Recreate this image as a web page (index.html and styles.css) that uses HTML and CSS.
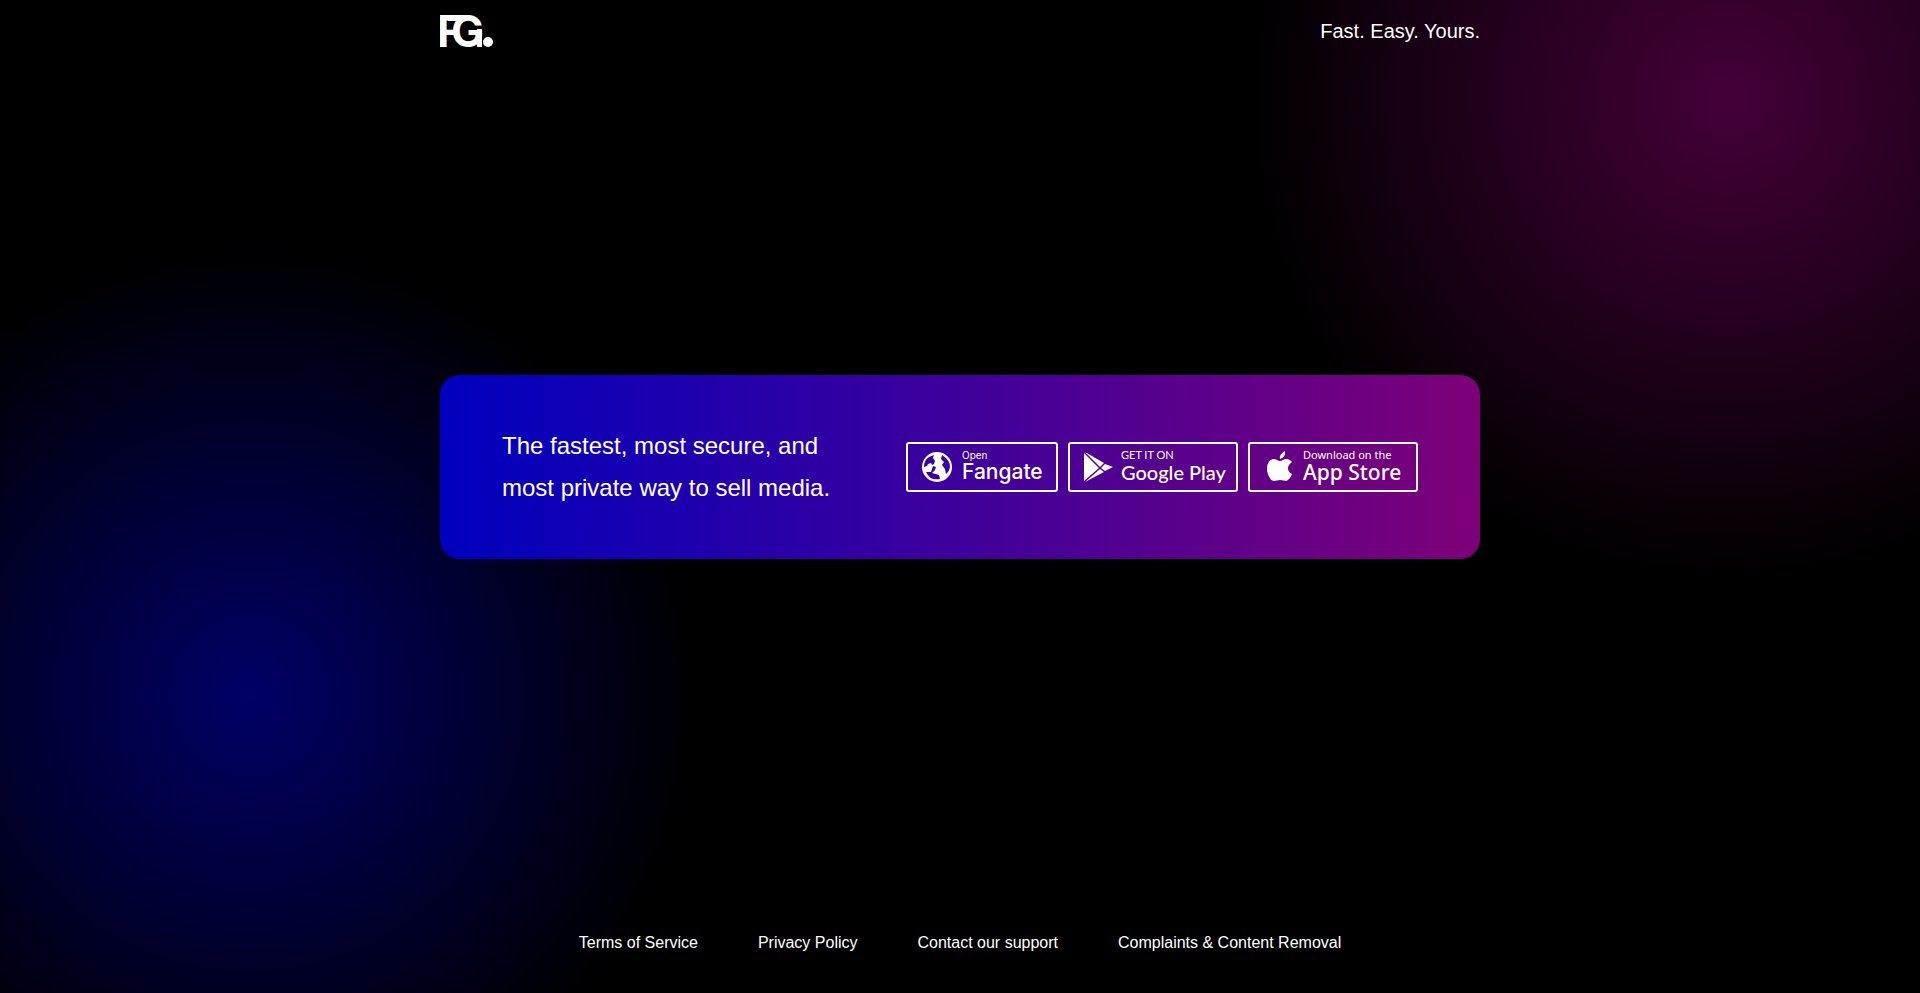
FILE: index.html
```html
<!DOCTYPE html>
<html lang="en">
<head>
    <meta charset="UTF-8">
    <meta name="viewport" content="width=device-width, initial-scale=1">
    <title>Fangate</title>
    <link rel="stylesheet" href="styles.css">
</head>
<body>
    <!-- Header -->
    <header class="container header">
        <a class="logo" href="/" aria-label="Fangate home">
            <svg width="54" height="34" viewBox="0 0 54 34">
                <defs>
                    <clipPath id="stem"><rect width="18" height="34"/></clipPath>
                </defs>
                <text class="logo-letter" x="-3" y="33" clip-path="url(#stem)">F</text>
                <rect x="8" y="1" width="20" height="6"/>
                <text class="logo-letter" x="11" y="33">G</text>
                <rect x="37" y="15" width="5" height="18"/>
                <circle cx="48" cy="28" r="5"/>
            </svg>
        </a>
        <p class="tagline">Fast. Easy. Yours.</p>
    </header>

    <!-- Banner -->
    <main class="container main">
        <section class="banner">
            <p class="banner-text">The fastest, most secure, and<br>most private way to sell media.</p>
            <div class="badges">
                <a class="badge fangate" href="#">
                    <svg width="30" height="30" viewBox="0 0 30 30">
                        <defs>
                            <mask id="land">
                                <rect width="30" height="30" fill="#fff"/>
                                <path fill="#000" d="M7 5L12 3L11 6L13 9L12 12L10 13L9 11L6 12L5 14L2 15Q2 8 7 5Z"/>
                                <path fill="#000" d="M4 20L9 20L11 14L14 15L13 18L10 21L17 23L18 27Q8 29 4 20Z"/>
                                <path fill="#000" d="M20 3Q28 8 28 15Q27 20 24 22L23 17L20 13L22 10L19 7Z"/>
                            </mask>
                        </defs>
                        <circle cx="15" cy="15" r="15" mask="url(#land)"/>
                    </svg>
                    <span class="badge-text">
                        <small>Open</small>
                        <strong>Fangate</strong>
                    </span>
                </a>
                <a class="badge google" href="#">
                    <svg width="29" height="32" viewBox="0 0 29 32">
                        <path d="M0 2V30L15 17ZM1 1L16 16L20 12ZM1 31L16 18L20 21ZM21 13L17 17L21 20L29 16Z"/>
                    </svg>
                    <span class="badge-text">
                        <small>GET IT ON</small>
                        <strong>Google Play</strong>
                    </span>
                </a>
                <a class="badge apple" href="#">
                    <svg width="26" height="32" viewBox="0 0 26 32">
                        <path d="M18 0Q19 6 13 8Q12 3 18 0Z"/>
                        <path d="M13 10C15 10 17 8 19 8Q23 8 25 11Q21 14 21 17Q21 21 25 23C24 26 21 30 19 30C17 30 16 29 13 29C11 29 9 30 7 30C3 30 0 22 0 18C0 12 3 8 7 8C9 8 11 10 13 10Z"/>
                    </svg>
                    <span class="badge-text">
                        <small>Download on the</small>
                        <strong>App Store</strong>
                    </span>
                </a>
            </div>
        </section>
    </main>

    <!-- Footer -->
    <footer class="footer">
        <a href="#">Terms of Service</a>
        <a href="#">Privacy Policy</a>
        <a href="#">Contact our support</a>
        <a href="#">Complaints &amp; Content Removal</a>
    </footer>
</body>
</html>
```
FILE: styles.css
```css
/* General */
* {
    box-sizing: border-box;
}

body {
    display: flex;
    flex-direction: column;
    min-height: 100vh;
    margin: 0;
    font-family: "Liberation Sans", Arial, sans-serif;
    color: #fff;
    background-color: #000;
    background-image:
        radial-gradient(circle 450px at 13% 70%, #000066, transparent),
        radial-gradient(circle 480px at 90% 10%, #440038, transparent);
}

p {
    margin: 0;
}

a {
    color: inherit;
    text-decoration: none;
}

svg {
    display: block;
    flex-shrink: 0;
    fill: #fff;
}

.container {
    width: 100%;
    max-width: 1040px;
    margin: 0 auto;
}

/* Header */
.header {
    display: flex;
    align-items: center;
    justify-content: space-between;
    height: 62px;
}

.logo-letter {
    font-family: Inter, sans-serif;
    font-size: 44px;
    font-weight: 700;
}

.tagline {
    font-size: 20px;
}

/* Banner */
.main {
    display: flex;
    flex: 1;
    align-items: center;
}

.banner {
    display: flex;
    flex: 1;
    flex-wrap: wrap;
    align-items: center;
    justify-content: space-between;
    gap: 20px;
    padding: 50px 62px;
    border-radius: 20px;
    background: linear-gradient(to right, #0000be, #7d0078);
}

.banner-text {
    font-size: 24px;
    line-height: 42px;
}

/* Store badges */
.badges {
    display: flex;
    flex-wrap: wrap;
    gap: 10px;
}

.badge {
    display: flex;
    align-items: center;
    gap: 10px;
    width: 170px;
    height: 50px;
    padding: 0 14px;
    border: 2px solid #fff;
    border-radius: 3px;
}

.badge-text {
    display: flex;
    flex-direction: column;
    padding-bottom: 2px;
    white-space: nowrap;
}

.badge small {
    font-size: 11px;
    line-height: 12px;
}

.badge strong {
    font-size: 21px;
    font-weight: 500;
    line-height: 22px;
}

.fangate {
    width: 152px;
    font-family: Inter, sans-serif;
}

.fangate small {
    font-size: 10px;
}

.google {
    gap: 8px;
    font-family: Lato, sans-serif;
}

.google strong {
    font-size: 20px;
}

.apple {
    padding: 0 17px;
    font-family: "Noto Sans", sans-serif;
}

/* Footer */
.footer {
    display: flex;
    flex-wrap: wrap;
    align-items: center;
    justify-content: center;
    gap: 10px 60px;
    min-height: 122px;
    padding-top: 22px;
    font-size: 16px;
}
```
